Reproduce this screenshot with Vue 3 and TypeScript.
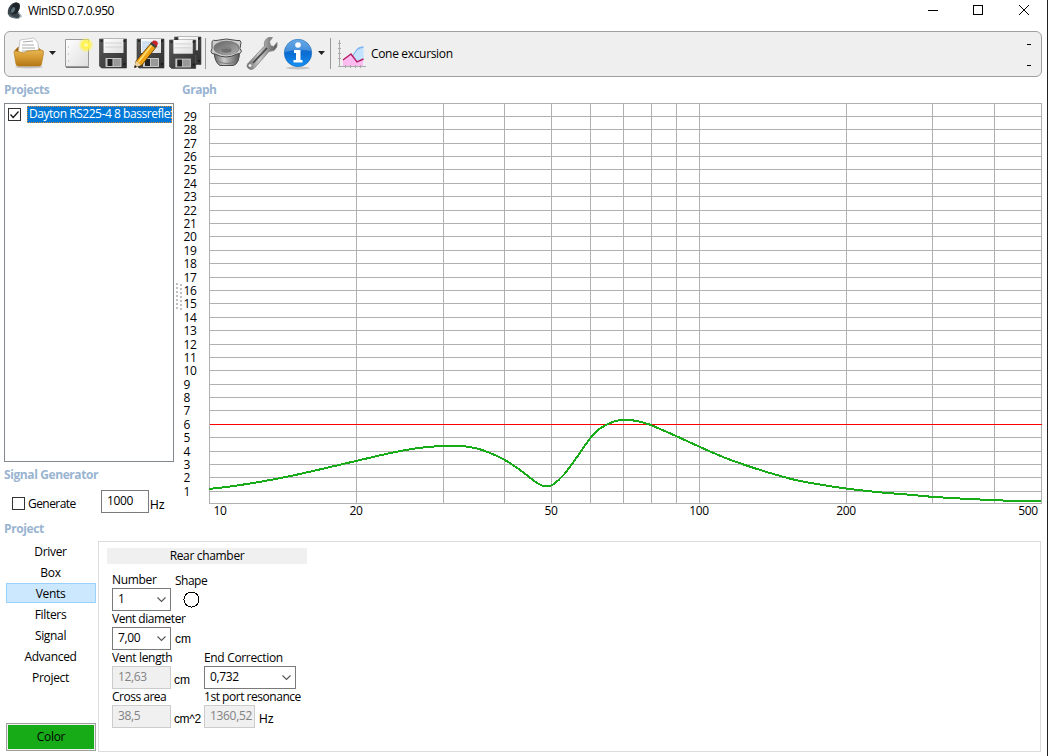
<script setup lang="ts">
interface Point { x: number; y: number }

const levels = Array.from({ length: 29 }, (_, i) => ({
  value: i + 1,
  y: Math.round(401.2 - 13.39 * (i + 1)),
}))
const verticals: number[] = [147, 234, 295, 342, 381, 414, 442, 467, 490, 637, 723, 785]
const ticks = [
  { text: '10', x: 11 },
  { text: '20', x: 147 },
  { text: '50', x: 342 },
  { text: '100', x: 490 },
  { text: '200', x: 637 },
  { text: '500', x: 819 },
]

const samples: Point[] = [
  [209, 489], [229, 486.7], [256, 482.5], [286, 477], [316, 470.3], [356, 461], [386, 454],
  [406, 450], [425, 447.3], [443, 446], [462, 446], [477, 448.5], [490, 453], [504, 459.5],
  [520, 470], [535, 481.5], [542, 485.6], [547, 486.3], [553, 484.5], [564, 474.5], [577, 457],
  [590, 438.5], [598, 430], [608, 424], [617, 420.7], [626, 420], [635, 420.7], [648, 424],
  [660, 429], [676, 436], [699, 446.5], [723, 457], [745, 465], [770, 473], [800, 481],
  [846, 488.5], [880, 492.3], [910, 494.8], [932, 496.8], [960, 498.5], [994, 500.2],
  [1015, 500.8], [1041, 501],
].map(([x, y]) => ({ x: x - 209, y: y - 103 }))

function smooth(p: Point[]): string {
  let d = `M${p[0].x} ${p[0].y}`
  for (let i = 0; i < p.length - 1; i++) {
    const a = p[Math.max(i - 1, 0)]
    const b = p[i]
    const c = p[i + 1]
    const e = p[Math.min(i + 2, p.length - 1)]
    const h = (c.x - b.x) / 3
    const m1 = (c.y - a.y) / (c.x - a.x)
    const m2 = (e.y - b.y) / (e.x - b.x)
    d += `C${b.x + h} ${b.y + m1 * h} ${c.x - h} ${c.y - m2 * h} ${c.x} ${c.y}`
  }
  return d
}
const curve = smooth(samples)
const tabs: string[] = ['Driver', 'Box', 'Vents', 'Filters', 'Signal', 'Advanced', 'Project']
const active = 'Vents'
</script>

<template>
  <div class="window">
    <header class="titlebar">
      <svg class="logo" width="18" height="18" viewBox="0 0 18 18">
        <path d="M8 .5q5-.5 5 3 0 4-2 6l3.500 5-3 2q-6 .5-9-2Q0 12 .8 9 2 2 8 .5z" fill="#39444b" />
        <ellipse cx="8" cy="6.500" rx="4.200" ry="6.200" transform="rotate(25 8 6.500)" fill="#1d2529" />
        <ellipse cx="6" cy="8" rx="1.800" ry="3" transform="rotate(25 6 8)" fill="#5c7079" />
        <path d="M1.500 12q2 3.500 7 4" stroke="#6f8189" fill="none" />
        <path d="M11.500 10.500l2.500 3.500-2 2" stroke="#a9b6bd" stroke-width="1.300" fill="none" />
      </svg>
      <span class="title">WinISD 0.7.0.950</span>
      <svg class="controls" width="106" height="20" viewBox="0 0 106 20" shape-rendering="crispEdges">
        <path d="M0 10.500h10M45.500 5.500h9v9h-9z" fill="none" stroke="#000" />
        <path d="M91 5l10 10M101 5l-10 10" stroke="#000" fill="none" shape-rendering="auto" />
      </svg>
    </header>

    <div class="toolbar">
      <svg class="icons" width="364" height="44" viewBox="5 32 364 44">
        <defs>
          <linearGradient id="gold" x1="0" y1="0" x2="0" y2="1">
            <stop offset="0" stop-color="#e6b653" /><stop offset=".45" stop-color="#d79c34" /><stop offset="1" stop-color="#b27614" />
          </linearGradient>
          <linearGradient id="disk" x1="0" y1="0" x2="1" y2="1">
            <stop offset="0" stop-color="#585858" /><stop offset="1" stop-color="#303030" />
          </linearGradient>
          <linearGradient id="paper" x1="0" y1="0" x2="1" y2="1">
            <stop offset="0" stop-color="#fff" /><stop offset="1" stop-color="#dedede" />
          </linearGradient>
          <linearGradient id="metal" x1="0" y1="0" x2="1" y2="0">
            <stop offset="0" stop-color="#666" /><stop offset=".4" stop-color="#ccc" /><stop offset="1" stop-color="#555" />
          </linearGradient>
          <linearGradient id="cone" x1="0" y1="0" x2="1" y2="1">
            <stop offset="0" stop-color="#666" /><stop offset="1" stop-color="#b0b0b0" />
          </linearGradient>
          <radialGradient id="glow">
            <stop offset="0" stop-color="#fffde0" /><stop offset=".35" stop-color="#fff34a" /><stop offset=".65" stop-color="#fff34a" stop-opacity=".75" /><stop offset="1" stop-color="#fff34a" stop-opacity="0" />
          </radialGradient>
          <linearGradient id="blue" x1="0" y1="0" x2="0" y2="1">
            <stop offset="0" stop-color="#3e91df" /><stop offset=".5" stop-color="#0b6bd0" /><stop offset="1" stop-color="#1590f4" />
          </linearGradient>
          <g id="floppy">
            <path d="M0 0h27v29H2l-2-2z" fill="url(#disk)" stroke="#343434" stroke-width=".6" />
            <path d="M4 0h20v14H4z" fill="url(#paper)" />
            <path d="M5.500 4h17M5.500 8h17" stroke="#d2d2d2" />
            <path d="M6 19h16v9H6z" fill="#c4c4c4" />
            <path d="M8 20h5v7H8z" fill="#222" />
            <path d="M14 20h7v7h-7z" fill="#999" />
            <path d="M1 2h2M24 2h2M24 25h2" stroke="#151515" stroke-width="1.500" />
          </g>
        </defs>

        <ellipse cx="29" cy="67" rx="14" ry="1.500" fill="#999" opacity=".5" />
        <path d="M15 50l3-3h20l4 4-1 9H16z" fill="#a8660b" />
        <path d="M20 40l14-2 4 5 1 12H18z" fill="#fff" stroke="#bbb" stroke-width=".8" />
        <path d="M23 42l10-1M22 45h12M22 48h13M22 51h14" stroke="#aaa" />
        <path d="M14 52q0-2 2-1l8 2 3-2 14-1q3 0 2.500 3l-2 11q0 2-3 2H19q-3 0-3-2z" fill="url(#gold)" stroke="#b77c1c" stroke-width=".7" />
        <path d="M49 51h7l-3.500 4z" fill="#222" />

        <path d="M65.500 39.500h23v27h-23z" fill="url(#paper)" stroke="#999" />
        <path d="M66 67.500h23" stroke="#777" />
        <path d="M68 47h1M68 54h1M68 61h1" stroke="#aaa" />
        <circle cx="86" cy="45" r="7.500" fill="url(#glow)" />

        <use href="#floppy" x="99.500" y="39" />
        <use href="#floppy" x="137" y="39" />
        <path d="M142 41h17l-11 11h-6z" fill="#c5dcf4" opacity=".7" />
        <path d="M136 61l16-19 5 4-15 19-7 2z" fill="#eea414" stroke="#583300" stroke-width=".8" />
        <path d="M138.500 62l15-19" stroke="#ffe078" stroke-width="1.500" />
        <path d="M151.500 42.500l2-2q2-.5 3.500 1t.500 3.500l-1.500 2z" fill="#c92228" />
        <path d="M150 44l5 4 1.500-2-5-4z" fill="#444" />
        <path d="M136 61l5 4-7 3z" fill="#ead3a5" /><path d="M135 65l2 2-3 1z" fill="#111" />

        <g transform="translate(174.500 37) scale(.98 .95)"><use href="#floppy" /></g>
        <g transform="translate(169.500 40) scale(.97 .98)"><use href="#floppy" /></g>
        <path d="M205.500 38v31M330.500 38v31" stroke="#999" />

        <path d="M214 52q1 11 6 13.500h13.500q6-2 6-14" fill="url(#metal)" stroke="#4b4b4b" />
        <path d="M217 61q10 5 19 0" fill="none" stroke="#777" />
        <path d="M212 41.500q1-2 4-1 10-3 21 0 4-1 4 2l-1 6q3 3 0 5l-3 .5q-11 6-22 0l-3-.5q-2-2 0-5z" fill="#ccc" stroke="#4b4b4b" />
        <ellipse cx="226.500" cy="48" rx="13" ry="7.200" fill="#777" />
        <ellipse cx="226.500" cy="48.500" rx="12" ry="6.500" fill="url(#cone)" />
        <ellipse cx="226.500" cy="50" rx="5" ry="2.800" fill="#6f6f6f" />
        <path d="M222.500 49q4-2.500 8 0" fill="none" stroke="#8b8b8b" />

        <path d="M247.500 64l17-18q-1-6 4-8.500l4 0-3 4 1 4 3 1 3.500-4q1 5-3 8l-5 1-15 17q-3 2-5.500 0t-1-4.500z" fill="url(#metal)" stroke="#808080" stroke-width=".8" />
        <path d="M253 63l14-15" stroke="#4b4b4b" stroke-width="1.800" />
        <circle cx="250" cy="65.500" r="1.500" fill="#eee" />

        <ellipse cx="298" cy="68" rx="12" ry="1.500" fill="#888" opacity=".4" />
        <circle cx="298" cy="53" r="13.700" fill="url(#blue)" stroke="#1768b3" stroke-width=".6" />
        <path d="M285 52a13 12 0 0 1 26-1q-12-3-26 1z" fill="#fff" opacity=".22" />
        <circle cx="298" cy="45" r="2.800" fill="#fff" />
        <path d="M294 50h6.500v10h2v2.500h-9V60h2.500v-7h-2z" fill="#fff" />
        <path d="M318 51h7l-3.500 4z" fill="#222" />

        <path d="M352 60l5-9q2-3 6.500-4v14h-11z" fill="#c2e2ff" />
        <path d="M352 57l4-6q2-3.500 7.500-4" fill="none" stroke="#79b5f6" stroke-width="1.300" />
        <path d="M343 60l8-6 7 8 5-3v7h-20z" fill="#ffb5f0" opacity=".9" />
        <path d="M343 60l8-6 6 8 6.500-3" fill="none" stroke="#b51d61" stroke-width="1.400" />
        <path d="M339.500 40v27M338 66.500h28M338 43.500h3M338 48.500h3M338 53.500h3M338 58.500h3M345.500 65v3M350.500 65v3M355.500 65v3M360.500 65v3" fill="none" stroke="#aaa" />
      </svg>
      <span class="plot-name">Cone excursion</span>
      <div class="readouts"><i></i><i></i></div>
    </div>

    <main class="workspace">
      <section class="side">
        <h2 class="projects">Projects</h2>
        <div class="list">
          <div class="entry">
            <span class="check"><svg width="11" height="11" viewBox="0 0 11 11"><path d="M1.500 5.500l2.700 3L9.500 2.500" fill="none" stroke="#111" stroke-width="1.200" /></svg></span>
            <span class="selected">Dayton RS225-4 8 bassreflex</span>
          </div>
        </div>
        <h2 class="generator">Signal Generator</h2>
        <div class="generate">
          <span class="check"></span><span class="gen-text">Generate</span>
          <span class="box">1000</span><span class="unit">Hz</span>
        </div>
      </section>
      <section class="graph">
        <h2 class="graph-title">Graph</h2>
        <svg class="plot" width="866" height="420" viewBox="-33 0 866 420">
          <g shape-rendering="crispEdges" stroke="#b0b0b0" fill="none">
            <path d="M.5 .5h832v400H.5z" />
            <path v-for="x in verticals" :key="x" :d="`M${x}.5 0v401`" />
            <path v-for="l in levels" :key="l.value" :d="`M0 ${l.y}.5h833`" />
            <path d="M1 321.500h832" class="limit" />
            <path class="curve" :d="curve" />
            <path class="grip" d="M-32 180v28M-28.500 181v28" />
          </g>
          <text v-for="l in levels" :key="l.value" x="-25.500" :y="l.y + 5">{{ l.value }}</text>
          <text v-for="t in ticks" :key="t.text" :x="t.x" y="412" text-anchor="middle">{{ t.text }}</text>
        </svg>
      </section>
    </main>

    <h2 class="project-title">Project</h2>
    <div class="project">
      <nav>
        <div v-for="t in tabs" :key="t" class="tab" :class="{ on: t === active }">{{ t }}</div>
        <div class="color">Color</div>
      </nav>
      <div class="panel">
        <div class="chamber">Rear chamber</div>
        <div class="fields">
          <div class="row">
            <div class="field first">
              <label>Number</label>
              <span class="box combo">1<svg width="10" height="6" viewBox="0 0 10 6"><path d="M.5 .5l4 4 4-4" /></svg></span>
            </div>
            <div class="shape">
              <span>Shape</span>
              <svg width="17" height="17" viewBox="0 0 17 17"><circle cx="8.500" cy="8.500" r="7.500" fill="none" stroke="#000" shape-rendering="crispEdges" /></svg>
            </div>
          </div>
          <div class="row">
            <div class="field first">
              <label class="tight">Vent diameter</label>
              <span class="box combo">7,00<svg width="10" height="6" viewBox="0 0 10 6"><path d="M.5 .5l4 4 4-4" /></svg></span>
            </div>
            <span class="unit">cm</span>
          </div>
          <div class="row">
            <div class="field first">
              <label>Vent length</label>
              <span class="box off">12,63</span>
            </div>
            <span class="unit low">cm</span>
            <div class="field wide">
              <label>End Correction</label>
              <span class="box combo">0,732<svg width="10" height="6" viewBox="0 0 10 6"><path d="M.5 .5l4 4 4-4" /></svg></span>
            </div>
          </div>
          <div class="row">
            <div class="field first">
              <label class="loose">Cross area</label>
              <span class="box off">38,5</span>
            </div>
            <span class="unit low square">cm^2</span>
            <div class="field res">
              <label class="tight">1st port resonance</label>
              <span class="box off">1360,52</span>
            </div>
            <span class="unit low">Hz</span>
          </div>
        </div>
      </div>
    </div>
  </div>
</template>

<style>
html, body { margin: 0; background: #fff; overflow: hidden; }
</style>

<style scoped>
.window {
  box-sizing: border-box; width: 1048px; height: 756px; overflow: hidden;
  display: flex; flex-direction: column; background: #fff; color: #000;
  border-right: 1px solid #222; font: 12px/16px "Open Sans", sans-serif; letter-spacing: -.33px;
  white-space: nowrap;
}
.window * { box-sizing: border-box; }
h2 { margin: 0; font-size: 12px; line-height: 16px; font-weight: 700; color: #99b4d1; letter-spacing: -.4px; }
.titlebar { height: 31px; display: flex; flex: none; padding-left: 7px; }
.logo { margin-top: 2px; }
.title { margin: 3px 0 0 3px; letter-spacing: -.5px; }
.controls { margin-left: auto; margin-right: 13px; }
.toolbar {
  flex: none; height: 46px; width: 1038px; margin-left: 4px; display: flex; align-items: center;
  border: 1px solid #a0a0a0; border-radius: 6px; background: #efefef;
}
.icons { flex: none; }
.plot-name { margin-left: 2px; }
.readouts { margin: 2px 10px 0 auto; display: flex; flex-direction: column; gap: 20px; }
.readouts i { width: 4px; height: 1px; background: #000; }
.workspace { flex: none; height: 443px; display: flex; }
.side { width: 176px; padding: 5px 0 0 4px; }
.list { margin-top: 5px; width: 170px; height: 359px; border: 1px solid #828790; padding: 1px; }
.entry { display: flex; height: 18px; align-items: center; padding-left: 2px; }
.check { flex: none; width: 13px; height: 13px; border: 1px solid #333; display: block; }
.check svg { display: block; }
.selected { margin-left: 6px; width: 145px; height: 17px; background: #0078d7; outline: 1px dotted #e08a30; outline-offset: -1px; color: #fff; overflow: hidden; padding-left: 2px; letter-spacing: -.45px; }
.generator { margin-top: 5px; }
.generate { display: flex; height: 25px; margin: 7px 0 0 8px; align-items: flex-start; }
.generate .check { margin-top: 7px; }
.gen-text { margin: 6px 0 0 3px; width: 73px; letter-spacing: -.55px; }
.generate .box { width: 48px; }
.generate .unit { margin: 7px 0 0 1px; }
.box { display: flex; align-items: center; height: 23px; padding: 0 5px 1px; border: 1px solid #7a7a7a; background: #fff; }
.unit { font-size: 12px; font-family: "Liberation Sans", sans-serif; letter-spacing: 0; }
.graph { flex: 1; padding-top: 5px; }
.graph-title { margin-left: 6px; letter-spacing: -.5px; }
.plot { display: block; margin-top: 5px; }
.plot .limit { stroke: #f00; }
.plot .curve { stroke: #18ab18; stroke-width: 2; }
.plot .grip { stroke: #c0c0c0; stroke-width: 2; stroke-dasharray: 2 2; }
.project-title { flex: none; height: 16px; margin: 1px 0 0 4px; }
.project { display: flex; margin-top: 4px; flex: none; height: 211px; }
nav { width: 98px; padding-left: 6px; display: flex; flex-direction: column; align-items: flex-start; }
.tab { width: 90px; height: 20px; margin-bottom: 1px; padding-right: 1px; text-align: center; line-height: 21px; flex: none; }
.tab.on { background: #cce8ff; border: 1px solid #99d1ff; line-height: 19px; }
.color { width: 90px; height: 28px; margin-top: 35px; border: 1px solid #a0a0a0; background: #18ab18; box-shadow: inset 0 0 0 1px #f0f0f0; text-align: center; line-height: 26px; }
.panel { width: 943px; height: 211px; border: 1px solid #dcdcdc; }
.chamber { width: 200px; height: 16px; margin: 6px 0 0 8px; background: #f0f0f0; text-align: center; }
.fields { margin: 8px 0 0 13px; }
.row { display: flex; height: 39px; }
.field { display: flex; flex-direction: column; }
.field.first { width: 59px; }
.field label { height: 16px; }
.tight { letter-spacing: -.47px; }
.loose { letter-spacing: -.5px; }
.combo svg { margin-left: auto; margin-top: 1px; margin-right: -2px; }
.combo path { fill: none; stroke: #555; stroke-width: 1.1; }
.off { border-color: #ccc; background: #f0f0f0; color: #838383; }
.row .unit { margin: 20px 0 0 4px; line-height: 16px; }
.row .unit.low { margin-top: 22px; }
.shape { margin: 1px 0 0 4px; display: flex; flex-direction: column; letter-spacing: -.5px; }
.shape svg { margin: 2px 0 0 8px; }
.row .unit.low { width: 30px; margin-left: 3px; }
.row .unit.square { letter-spacing: -.4px; }
.row .res + .unit.low { margin-left: 4px; }
.row .field + .unit.low + .field { margin-left: 0; }
.field.wide { width: 92px; }
.field.res { width: 51px; }
</style>
